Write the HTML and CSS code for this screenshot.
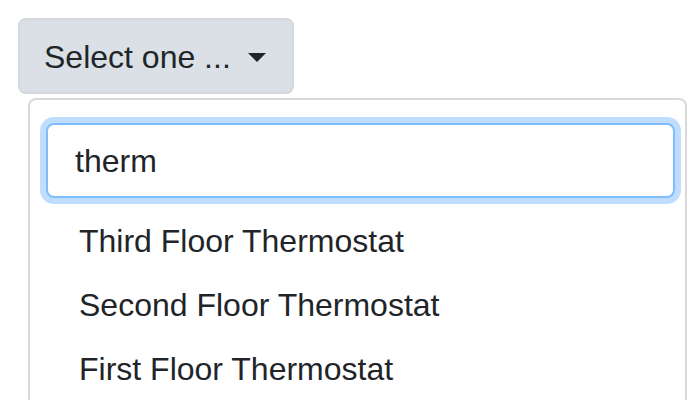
FILE: index.html
```html
<!DOCTYPE html>
<html>
<head>
<meta charset="utf-8">
<link rel="stylesheet" href="styles.css">
</head>
<body>
<div class="page">
  <div class="dropdown">
    <button class="toggle" type="button">Select one ...<span class="caret"></span></button>
    <div class="menu">
      <input class="search" type="text" value="therm">
      <a class="item">Third Floor Thermostat</a>
      <a class="item">Second Floor Thermostat</a>
      <a class="item">First Floor Thermostat</a>
    </div>
  </div>
</div>
</body>
</html>
```

FILE: styles.css
```css
html, body {
  margin: 0;
  padding: 0;
  background: #fff;
}
body {
  font-family: "Liberation Sans", Arial, sans-serif;
  font-size: 32px;
  line-height: 48px;
  color: #212529;
}
.page {
  padding: 18px 0 0 18px;
}
.dropdown {
  display: flex;
  flex-direction: column;
  align-items: flex-start;
}
.toggle {
  display: flex;
  align-items: center;
  box-sizing: border-box;
  height: 76px;
  width: 276px;
  padding: 13px 24px 11px;
  font-family: inherit;
  font-size: 32px;
  line-height: 48px;
  color: #212529;
  background: #dae0e5;
  border: 2px solid #d3d9df;
  border-radius: 8px;
}
.caret {
  display: inline-block;
  width: 0;
  height: 0;
  margin-left: 17px;
  margin-top: 0;
  border-top: 9px solid #212529;
  border-left: 9px solid transparent;
  border-right: 9px solid transparent;
}
.menu {
  box-sizing: border-box;
  margin: 4px 0 0 10px;
  width: 659px;
  padding: 23px 0 16px;
  border: 2px solid #d9d9d9;
  border-radius: 8px;
  background: #fff;
  display: flex;
  flex-direction: column;
}
.search {
  box-sizing: border-box;
  margin: 0 0 11px 16px;
  width: 629px;
  height: 75px;
  padding: 13px 24px 11px 27px;
  font-family: inherit;
  font-size: 32px;
  line-height: 48px;
  color: #212529;
  border: 2px solid #80bdff;
  border-radius: 8px;
  box-shadow: 0 0 0 6px rgba(0, 123, 255, 0.25);
  outline: none;
}
.item {
  display: block;
  padding: 8px 48px 8px 49px;
  color: #212529;
  white-space: nowrap;
}
```
